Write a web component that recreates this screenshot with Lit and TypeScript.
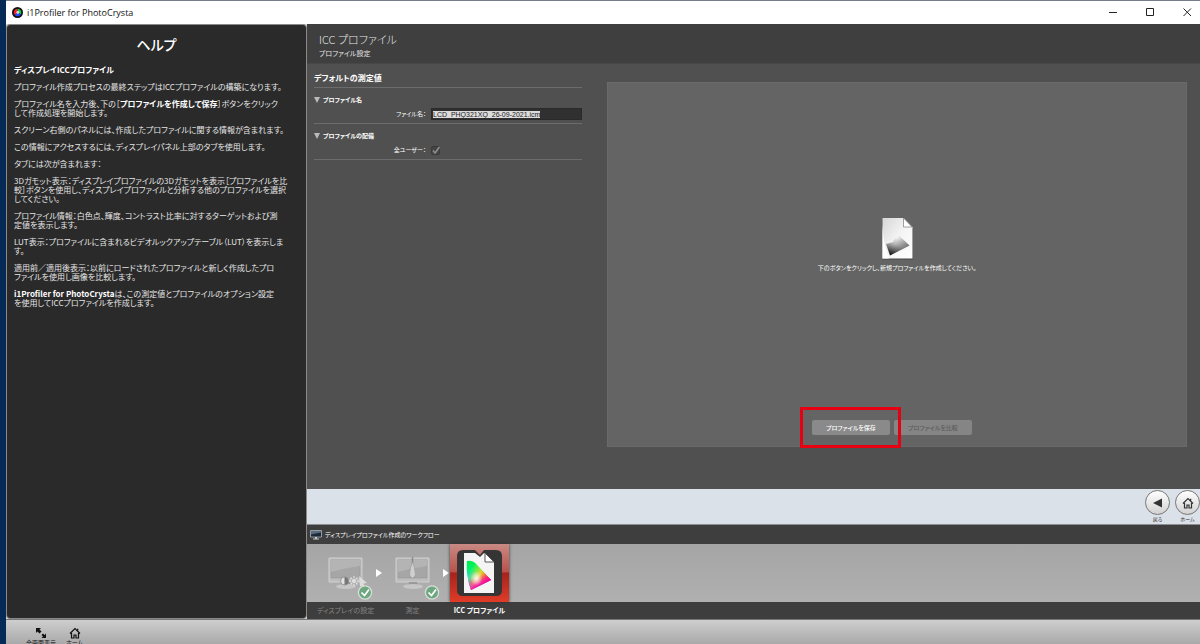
import { LitElement, html, css, svg } from "lit";
import { customElement, query } from "lit/decorators.js";

const houseIcon = svg`<path d="M1 6.5 6 1.5 11 6.5M2.5 6V11H5V8H7V11H9.5V6M8.7 3.6V1.8" fill="none" stroke="currentColor" stroke-width="1.2"/>`;

@customElement("title-bar")
class TitleBar extends LitElement {
  static styles = css`
    :host {
      display: flex;
      align-items: center;
      box-sizing: border-box;
      height: 24px;
      padding-left: 6px;
      background: #fff;
      border-top: 1px solid #737d8c;
      color: #111;
      font: 9px/22px "Open Sans", "Noto Sans", sans-serif;
    }
    .logo {
      width: 11px;
      height: 11px;
      margin-right: 4px;
    }
    .name {
      flex: 1;
    }
    .win {
      box-sizing: border-box;
      width: 37px;
      height: 22px;
      padding: 0;
      border: 0;
      background: none;
      display: grid;
      place-items: center;
    }
    .win svg {
      width: 9px;
      height: 9px;
    }
    .last {
      width: 31px;
      padding-left: 5px;
    }
  `;
  render() {
    return html`
      <svg class="logo" viewBox="0 0 12 12">
        <circle cx="6" cy="6" r="6" fill="#111" />
        <path d="M6 6V2A4 4 0 0 1 9.6 7.8Z" fill="#00d84a" />
        <path d="M6 6 9.6 7.8A4 4 0 0 1 3 8.7Z" fill="#2448ff" />
        <path d="M6 6 3 8.7A4 4 0 0 1 6 2Z" fill="#f4202c" />
        <circle cx="6.3" cy="6" r="1.6" fill="#fff" opacity=".75" />
      </svg>
      <span class="name">i1Profiler for PhotoCrysta</span>
      <button class="win" aria-label="最小化">
        <svg viewBox="0 0 9 9"><path d="M0 4.5H8" stroke="#222" /></svg>
      </button>
      <button class="win" aria-label="最大化">
        <svg viewBox="0 0 9 9"><path d="M.5.5h7v7h-7z" fill="none" stroke="#222" /></svg>
      </button>
      <button class="win last" aria-label="閉じる">
        <svg viewBox="0 0 9 9"><path d="M.5.5 8 8M8 .5.5 8" stroke="#222" /></svg>
      </button>
    `;
  }
}

@customElement("help-panel")
class HelpPanel extends LitElement {
  static styles = css`
    :host {
      display: block;
      box-sizing: border-box;
      padding: 9px 7px;
      background: #2a2a2a;
      border: 1px solid #8c8a86;
      border-radius: 4px;
      color: #e6e6e6;
      font-size: 8px;
      line-height: 9px;
      white-space: nowrap;
    }
    h1 {
      margin: 0 0 11px;
      color: #fff;
      font-size: 14px;
      line-height: 20px;
      font-weight: 500;
      text-align: center;
    }
    h2 {
      margin: 0 0 8px;
      color: #fff;
      font-size: 8px;
      line-height: 9px;
      font-weight: 700;
    }
    p {
      margin: 0 0 8px;
    }
    b {
      color: #fff;
    }
  `;
  render() {
    return html`
      <h1>ヘルプ</h1>
      <h2>ディスプレイICCプロファイル</h2>
      <p>プロファイル作成プロセスの最終ステップはICCプロファイルの構築になります。</p>
      <p>プロファイル名を入力後、下の［<b>プロファイルを作成して保存</b>］ボタンをクリック<br />して作成処理を開始します。</p>
      <p>スクリーン右側のパネルには、作成したプロファイルに関する情報が含まれます。</p>
      <p>この情報にアクセスするには、ディスプレイパネル上部のタブを使用します。</p>
      <p>タブには次が含まれます：</p>
      <p>3Dガモット表示：ディスプレイプロファイルの3Dガモットを表示［プロファイルを比<br />較］ボタンを使用し、ディスプレイプロファイルと分析する他のプロファイルを選択<br />してください。</p>
      <p>プロファイル情報：白色点、輝度、コントラスト比率に対するターゲットおよび測<br />定値を表示します。</p>
      <p>LUT表示：プロファイルに含まれるビデオルックアップテーブル（LUT）を表示しま<br />す。</p>
      <p>適用前／適用後表示：以前にロードされたプロファイルと新しく作成したプロ<br />ファイルを使用し画像を比較します。</p>
      <p><b>i1Profiler for PhotoCrysta</b>は、この測定値とプロファイルのオプション設定<br />を使用してICCプロファイルを作成します。</p>
    `;
  }
}

@customElement("profile-settings")
class ProfileSettings extends LitElement {
  static styles = css`
    :host {
      display: block;
      box-sizing: border-box;
      width: 300px;
      padding: 7px 25px 0 7px;
      color: #fff;
      font-size: 6px;
      line-height: 12px;
    }
    h2 {
      margin: 0;
      padding-bottom: 2px;
      font-size: 8px;
      line-height: 14px;
      font-weight: 700;
      border-bottom: 1px solid #6c6c6c;
    }
    section {
      padding: 6px 0 3px;
      border-bottom: 1px solid #6c6c6c;
    }
    h3 {
      display: flex;
      align-items: center;
      gap: 3px;
      margin: 0 0 2px;
      font-size: 6px;
      line-height: 12px;
      font-weight: 700;
    }
    h3 svg {
      width: 6px;
      height: 6px;
    }
    .row {
      display: grid;
      grid-template-columns: 112px 1fr;
      column-gap: 5px;
      align-items: center;
    }
    .row label {
      text-align: right;
    }
    .file {
      box-sizing: border-box;
      width: 100%;
      height: 12px;
      padding: 0 1px;
      border: 1px solid #2a2a2a;
      background: #303030;
      color: #eee;
      font: 7px/8px "Liberation Sans", sans-serif;
      outline: none;
    }
    .file::selection {
      background: #dcdcdc;
      color: #222;
    }
    .tick {
      display: grid;
      width: 9px;
      height: 9px;
    }
    .tick > * {
      grid-area: 1 / 1;
    }
    .tick input {
      appearance: none;
      width: 9px;
      height: 9px;
      margin: 0;
      background: #444;
      border: 1px solid #3a3a3a;
      border-radius: 2px;
    }
    .tick svg {
      width: 9px;
      height: 9px;
      pointer-events: none;
    }
  `;
  @query(".file") file!: HTMLInputElement;
  firstUpdated() {
    this.file.focus();
    this.file.select();
  }
  render() {
    const arrow = html`<svg viewBox="0 0 6 6"><path d="M0 0H6L3 6Z" fill="#bbb" /></svg>`;
    return html`
      <h2>デフォルトの測定値</h2>
      <section>
        <h3>${arrow}プロファイル名</h3>
        <div class="row">
          <label for="file">ファイル名：</label>
          <input class="file" id="file" spellcheck="false" .value=${"LCD_PHQ321XQ_26-09-2021.icm"} />
        </div>
      </section>
      <section>
        <h3>${arrow}プロファイルの配備</h3>
        <div class="row">
          <label for="all">全ユーザー：</label>
          <span class="tick">
            <input id="all" type="checkbox" checked />
            <svg viewBox="0 0 9 9"><path d="M2 4.5 4 7 8.5 1" fill="none" stroke="#8d8d8d" stroke-width="1.6" /></svg>
          </span>
        </div>
      </section>
    `;
  }
}

@customElement("profile-preview")
class ProfilePreview extends LitElement {
  static styles = css`
    :host {
      display: flex;
      flex-direction: column;
      align-items: center;
      box-sizing: border-box;
      padding: 134px 0 11px;
      background: #646464;
      border: 1px solid #6a6a6a;
      color: #fff;
      font-size: 6px;
      line-height: 12px;
    }
    .doc {
      width: 33px;
      height: 43px;
    }
    p {
      margin: 2px 0 auto;
    }
    .actions {
      display: flex;
      gap: 4px;
      margin-right: 10px;
    }
    .actions button {
      width: 78px;
      height: 15px;
      padding: 0;
      border: 0;
      border-radius: 2px;
      background: #8a8a8a;
      color: #fff;
      font: inherit;
      font-weight: 500;
      line-height: 15px;
    }
    .actions button:disabled {
      background: #858585;
      color: #5c5c5c;
    }
    .target {
      position: relative;
      display: flex;
    }
    .mark {
      position: absolute;
      inset: -13px -11px -13px -12px;
      border: 3px solid #e60012;
      pointer-events: none;
      z-index: 1;
    }
  `;
  render() {
    return html`
      <svg class="doc" viewBox="0 0 33 43">
        <defs>
          <linearGradient id="pg" x1="0" y1="0" x2="1" y2="1">
            <stop offset="0" stop-color="#d6d6d6" />
            <stop offset=".5" stop-color="#f4f4f4" />
            <stop offset="1" stop-color="#fff" />
          </linearGradient>
          <linearGradient id="gm" x1=".6" y1=".2" x2=".3" y2="1">
            <stop offset="0" stop-color="#f4f4f4" />
            <stop offset=".4" stop-color="#b4b4b4" />
            <stop offset="1" stop-color="#111" />
          </linearGradient>
          <linearGradient id="tip" x1=".4" y1=".4" x2="1" y2=".6">
            <stop offset="0" stop-color="#555" stop-opacity="0" />
            <stop offset="1" stop-color="#555" stop-opacity=".8" />
          </linearGradient>
        </defs>
        <path d="M1.5 2.5H23L32 12V42.5H1.5Z" fill="#444" />
        <path d="M1.5 1H22.5L31.500 10V41.5H1.5Z" fill="url(#pg)" />
        <path d="M1.500 8V41.500H8Q2.500 28 1.500 8Z" fill="#fff" />
        <path d="M22.5 1V10H31Z" fill="#fff" stroke="#888" stroke-width=".8" />
        <path d="M5 27 12 25 16.500 17 28.500 28.500 9 38.500Z" fill="url(#gm)" />
        <path d="M5 27 12 25 16.500 17 28.500 28.500 9 38.500Z" fill="url(#tip)" />
      </svg>
      <p>下のボタンをクリックし、新規プロファイルを作成してください。</p>
      <div class="actions">
        <span class="target"><button>プロファイルを保存</button><i class="mark"></i></span>
        <button disabled>プロファイルを比較</button>
      </div>
    `;
  }
}

@customElement("work-flow")
class WorkFlow extends LitElement {
  static styles = css`
    :host {
      display: block;
      background: #3e3e3e;
    }
    .head {
      display: flex;
      align-items: center;
      gap: 3px;
      height: 19px;
      padding-left: 3px;
      color: #fff;
      font-size: 6px;
      line-height: 19px;
    }
    .head svg {
      width: 12px;
      height: 10px;
    }
    .steps {
      display: flex;
      padding-left: 9px;
      background: linear-gradient(#a5a5a5, #b0b0b0 58px, #3e3e3e 58px);
    }
    .step {
      display: flex;
      flex-direction: column;
      align-items: center;
      width: 59px;
      padding: 0;
      border: 0;
      background: none;
      color: #858585;
      font: inherit;
      font-size: 7px;
      line-height: 17px;
      white-space: nowrap;
    }
    .step svg {
      width: 59px;
      height: 58px;
    }
    .on {
      color: #fff;
      font-weight: 700;
    }
    .on svg {
      background: linear-gradient(#c98a84, #b9514a 48%, #a5231c 50%, #e03c28);
      box-shadow: 0 0 3px #333;
    }
    .gap {
      display: grid;
      place-items: center;
      width: 8px;
      height: 58px;
    }
    .gap svg {
      width: 6px;
      height: 8px;
    }
  `;
  private monitor = svg`
    <path d="M13 14H46V38H13Z" fill="#bdbdbd" stroke="#d0d0d0"/>
    <path d="M15 16H44V34H15Z" fill="#a6a6a6" stroke="#999" stroke-width=".6"/>
    <path d="M15 16H44V22Q30 24 15 28Z" fill="#b4b4b4"/>
    <path d="M26 38H34L35 42H25Z" fill="#999"/>
    <ellipse cx="30" cy="42.500" rx="10" ry="2.500" fill="#c6c6c6"/>`;
  private done = svg`
    <circle cx="49" cy="48.500" r="6.600" fill="#6fa880" stroke="#d5ddd6" stroke-width="1.300"/>
    <path d="M45.500 48.500 48.500 51.500 53 45.500" fill="none" stroke="#fff" stroke-width="1.700"/>`;
  render() {
    const arrow = html`<span class="gap"><svg viewBox="0 0 6 8"><path d="M0 0 6 4 0 8Z" fill="#fff" /></svg></span>`;
    return html`
      <div class="head">
        <svg viewBox="0 0 12 10">
          <path d="M.5.5H11.500V7H.5Z" fill="#1c2938" stroke="#aeb6bd" stroke-width=".8" />
          <path d="M1 1H11V2.500L1 4.500Z" fill="#5a6b7d" />
          <path d="M5 7H7V8.500H9V9.600H3V8.500H5Z" fill="#c5c5c5" />
        </svg>
        ディスプレイプロファイル作成のワークフロー
      </div>
      <div class="steps">
        <button class="step">
          <svg viewBox="0 0 59 58">
            ${this.monitor}
            <circle cx="28.500" cy="37" r="4" fill="#e2e2e2" stroke="#888" stroke-width=".8" />
            <path d="M28.500 33A4 4 0 0 1 28.500 41Z" fill="#777" />
            <path d="M38 32V42M33 37H43M34.500 33.500 41.500 40.500M41.500 33.500 34.500 40.500" stroke="#e0e0e0" stroke-width="1.200" />
            <circle cx="38" cy="37" r="2.600" fill="#e0e0e0" stroke="#999" stroke-width=".6" />
            <path d="M43 32 51 39 47.500 39.500 49 43.500 44 42Z" fill="#dcdcdc" />
            ${this.done}
          </svg>
          ディスプレイの設定
        </button>
        ${arrow}
        <button class="step">
          <svg viewBox="0 0 59 58">
            ${this.monitor}
            <path d="M29.500 13V20" stroke="#888" stroke-width="1.500" />
            <path d="M29.500 18Q32 23 32.500 31Q29.500 37 26.500 31Q27 23 29.500 18Z" fill="#cfcfcf" stroke="#999" stroke-width=".7" />
            ${this.done}
          </svg>
          測定
        </button>
        ${arrow}
        <button class="step on">
          <svg viewBox="0 0 59 58">
            <defs>
              <linearGradient id="hue" gradientUnits="userSpaceOnUse" x1="18" y1="16" x2="22" y2="46">
                <stop offset="0" stop-color="#00f03c" />
                <stop offset=".35" stop-color="#00f07a" />
                <stop offset=".6" stop-color="#19c8ff" />
                <stop offset=".85" stop-color="#2a30ff" />
                <stop offset="1" stop-color="#5a10ff" />
              </linearGradient>
              <linearGradient id="warm" gradientUnits="userSpaceOnUse" x1="21" y1="24" x2="39" y2="36">
                <stop offset="0" stop-color="#cf0" stop-opacity="0" />
                <stop offset=".5" stop-color="#ffd020" stop-opacity=".9" />
                <stop offset="1" stop-color="#ff1010" />
              </linearGradient>
              <linearGradient id="pink" gradientUnits="userSpaceOnUse" x1="26" y1="33" x2="30" y2="42">
                <stop offset="0" stop-color="#f0f" stop-opacity="0" />
                <stop offset="1" stop-color="#f000d0" stop-opacity=".85" />
              </linearGradient>
              <radialGradient id="mid" cx=".4" cy=".6" r=".25">
                <stop offset="0" stop-color="#fff" stop-opacity=".9" />
                <stop offset="1" stop-color="#fff" stop-opacity="0" />
              </radialGradient>
            </defs>
            <path d="M13 6H25L30 11 34 6H46Q52 6 52 12V46Q52 52 46 52H13Q7 52 7 46V12Q7 6 13 6Z" fill="#353535" />
            <path d="M14 9H25L30 13 34 9H35L44 18V49H14Z" fill="#f4f4f4" />
            <path d="M35 9V18H44Z" fill="#fff" stroke="#555" stroke-width="1" />
            <path d="M17 17Q23 16 27 21L41 36 21 46Q15.500 31 17 17Z" fill="url(#hue)" />
            <path d="M17 17Q23 16 27 21L41 36 21 46Q15.500 31 17 17Z" fill="url(#warm)" />
            <path d="M17 17Q23 16 27 21L41 36 21 46Q15.500 31 17 17Z" fill="url(#pink)" />
            <path d="M17 17Q23 16 27 21L41 36 21 46Q15.500 31 17 17Z" fill="url(#mid)" />
          </svg>
          ICC プロファイル
        </button>
      </div>
    `;
  }
}

@customElement("app-root")
class AppRoot extends LitElement {
  static styles = css`
    :host {
      display: grid;
      grid-template-rows: auto 1fr 25px;
      box-sizing: border-box;
      height: 100vh;
      overflow: hidden;
      border-left: 6px solid #062a56;
      background: #d8d8d8;
      font-family: "Noto Sans CJK JP", sans-serif;
      font-feature-settings: "palt";
    }
    .body {
      display: grid;
      grid-template-columns: 301px 1fr;
      min-height: 0;
    }
    .main {
      display: flex;
      flex-direction: column;
      min-width: 0;
      background: #505050;
    }
    header {
      box-sizing: border-box;
      height: 40px;
      padding: 6px 12px;
      background: #3f3f3f;
      border-bottom: 1px solid #474747;
      color: #e6e6e6;
    }
    h1 {
      margin: 0;
      font-size: 11px;
      line-height: 18px;
      font-weight: 300;
    }
    .sub {
      margin: 0;
      font-size: 7px;
      line-height: 10px;
    }
    .content {
      display: flex;
      flex: 1;
      min-height: 0;
    }
    profile-preview {
      flex: 1;
      margin: 18px 13px 42px 0;
    }
    nav {
      display: flex;
      justify-content: flex-end;
      gap: 5px;
      box-sizing: border-box;
      height: 36px;
      padding-top: 1px;
      background: #dbe1e9;
      border-bottom: 1px solid #8b8e92;
    }
    .round {
      display: flex;
      flex-direction: column;
      align-items: center;
      padding: 0;
      border: 0;
      background: none;
      color: #333;
      font: inherit;
      font-size: 5px;
      line-height: 8px;
    }
    .disc {
      display: grid;
      place-items: center;
      box-sizing: border-box;
      width: 25px;
      height: 25px;
      border: 1px solid #777;
      border-radius: 50%;
      background: linear-gradient(#fff, #d2d2d2);
    }
    .disc svg {
      width: 12px;
      height: 12px;
    }
    footer {
      display: flex;
      gap: 10px;
      padding: 7px 20px 0;
      overflow: hidden;
      background: linear-gradient(#cecece, #a9a9a9);
      border-top: 1px solid #777;
    }
    .tool {
      display: flex;
      flex-direction: column;
      align-items: center;
      padding: 0;
      border: 0;
      background: none;
      color: #111;
      font: inherit;
      font-size: 6px;
      line-height: 8px;
    }
    .tool svg {
      flex: none;
      width: 12px;
      height: 12px;
    }
  `;
  render() {
    return html`
      <title-bar></title-bar>
      <div class="body">
        <help-panel></help-panel>
        <main class="main">
          <header>
            <h1>ICC プロファイル</h1>
            <p class="sub">プロファイル設定</p>
          </header>
          <div class="content">
            <profile-settings></profile-settings>
            <profile-preview></profile-preview>
          </div>
          <nav>
            <button class="round">
              <span class="disc"><svg viewBox="0 0 12 12"><path d="M1 6 10 1.500V10.500Z" fill="#333" /></svg></span>
              戻る
            </button>
            <button class="round">
              <span class="disc"><svg viewBox="0 0 12 12">${houseIcon}</svg></span>
              ホーム
            </button>
          </nav>
          <work-flow></work-flow>
        </main>
      </div>
      <footer>
        <button class="tool">
          <svg viewBox="0 0 12 12">
            <path d="M1 1H6L4.500 2.500 6.500 4.500 4.500 6.500 2.500 4.500 1 6ZM11 11H6.500L8 9.500 6.500 8 8 6.500 9.500 8 11 6.500Z" fill="#111" />
          </svg>
          全画面表示
        </button>
        <button class="tool">
          <svg viewBox="0 0 12 12">${houseIcon}</svg>
          ホーム
        </button>
      </footer>
    `;
  }
}
